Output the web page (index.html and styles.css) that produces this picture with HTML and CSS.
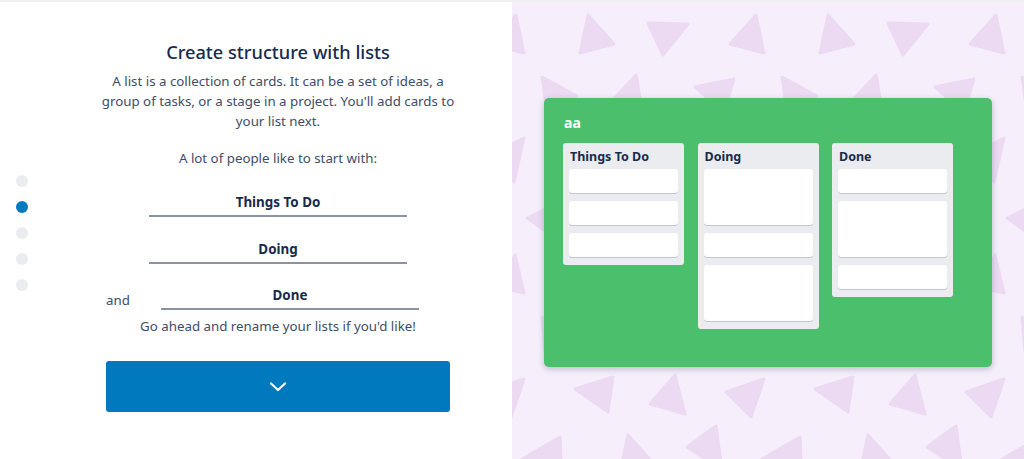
FILE: index.html
```html
<!DOCTYPE html>
<html lang="en">
<head>
<meta charset="utf-8">
<title>Create structure with lists</title>
<link rel="stylesheet" href="styles.css">
</head>
<body>
<div class="page">
  <section class="intro">
    <nav class="steps">
      <span class="dot"></span>
      <span class="dot active"></span>
      <span class="dot"></span>
      <span class="dot"></span>
      <span class="dot"></span>
    </nav>
    <div class="content">
      <h1 class="title">Create structure with lists</h1>
      <p class="lead">A list is a collection of cards. It can be a set of ideas, a group of tasks, or a stage in a project. You'll add cards to your list next.</p>
      <p class="prompt">A lot of people like to start with:</p>
      <div class="fields">
        <div class="field-row"><input class="list-input" type="text" value="Things To Do"></div>
        <div class="field-row"><input class="list-input" type="text" value="Doing"></div>
        <div class="field-row last"><span class="and">and</span><input class="list-input" type="text" value="Done"></div>
      </div>
      <p class="hint">Go ahead and rename your lists if you'd like!</p>
      <button class="next" type="button" aria-label="Next">
        <svg width="18" height="10" viewBox="0 0 18 10"><path d="M2 1.5 L9 8 L16 1.5" fill="none" stroke="#fff" stroke-width="2.2" stroke-linecap="round" stroke-linejoin="round"/></svg>
      </button>
    </div>
  </section>
  <section class="preview">
    <svg class="pattern" width="512" height="457" viewBox="0 2 512 457" aria-hidden="true">
      <defs>
        <g id="tile">
          <polygon points="76,15 102,44 68,53"/>
          <polygon points="136,23 176,24 151,55"/>
          <polygon points="4,15 12,53 -22,44"/>
          <polygon points="30,77 65,96 35,112"/>
          <polygon points="124,75 131,113 97,104"/>
          <polygon points="183,87 222,79 212,113"/>
          <polygon points="12,138 2,182 -12,150"/>
          <polygon points="15,218 52,200 46,240"/>
          <polygon points="3,255 12,293 -10,288"/>
          <polygon points="30,317 62,336 33,352"/>
          <polygon points="63,389 101,377 96,412"/>
          <polygon points="163,375 173,414 138,404"/>
          <polygon points="12,379 -1,417 -26,392"/>
          <polygon points="48,437 50,480 0,465"/>
          <polygon points="116,435 142,464 108,473"/>
          <polygon points="175,447 204,426 210,470"/>
        </g>
      </defs>
      <g class="tri">
        <use href="#tile" x="-240"/>
        <use href="#tile" x="0"/>
        <use href="#tile" x="240"/>
        <use href="#tile" x="480"/>
      </g>
    </svg>
    <div class="board">
      <div class="board-name">aa</div>
      <div class="lists">
        <div class="list">
          <div class="list-title">Things To Do</div>
          <div class="card"></div>
          <div class="card"></div>
          <div class="card"></div>
        </div>
        <div class="list">
          <div class="list-title">Doing</div>
          <div class="card tall"></div>
          <div class="card"></div>
          <div class="card tall"></div>
        </div>
        <div class="list">
          <div class="list-title">Done</div>
          <div class="card"></div>
          <div class="card tall"></div>
          <div class="card"></div>
        </div>
      </div>
    </div>
  </section>
</div>
</body>
</html>
```

FILE: styles.css
```css
* { box-sizing: border-box; }

html, body {
  margin: 0;
  padding: 0;
  height: 100%;
  overflow: hidden;
}

body {
  font-family: "Noto Sans", "Open Sans", "Liberation Sans", sans-serif;
  color: #172b4d;
  background: #fff;
}

.page {
  display: flex;
  height: 459px;
  border-top: 2px solid #f0f0f2;
}

/* ---------- left: intro ---------- */
.intro {
  width: 512px;
  flex: none;
  display: flex;
  background: #fff;
}

.steps {
  width: 106px;
  flex: none;
  display: flex;
  flex-direction: column;
  justify-content: center;
  gap: 14px;
  padding: 4px 0 0 16px;
}

.dot {
  width: 12px;
  height: 12px;
  border-radius: 50%;
  background: #ebecf0;
}

.dot.active { background: #0079bf; }

.content {
  width: 344px;
  flex: none;
  padding-top: 38px;
  display: flex;
  flex-direction: column;
  align-items: stretch;
  text-align: center;
}

.title {
  margin: 0;
  font-size: 18.2px;
  line-height: 24px;
  font-weight: 500;
  color: #172b4d;
}

.lead {
  margin: 7px -6px 0;
  font-size: 13.3px;
  line-height: 20px;
  color: #3e4d68;
}

.prompt {
  margin: 17px 0 0;
  font-size: 13.3px;
  line-height: 20px;
  color: #3e4d68;
}

.fields {
  margin-top: 19px;
  display: flex;
  flex-direction: column;
  gap: 16.5px;
}

.field-row {
  display: flex;
  align-items: flex-end;
  padding-left: 43px;
}

.field-row.last { padding-left: 0; }

.and {
  width: 55px;
  flex: none;
  text-align: left;
  font-size: 13.3px;
  line-height: 20px;
  color: #3e4d68;
}

.list-input {
  width: 258px;
  height: 30px;
  padding: 5px 0 3px;
  border: 0;
  border-bottom: 2px solid #8993a4;
  background: transparent;
  font-family: inherit;
  font-size: 13.4px;
  line-height: 20px;
  font-weight: 700;
  color: #172b4d;
  text-align: center;
  outline: none;
}

.hint {
  margin: 6px 0 0;
  font-size: 13.3px;
  line-height: 20px;
  color: #3e4d68;
}

.next {
  margin-top: 25px;
  height: 51px;
  width: 344px;
  border: 0;
  border-radius: 3px;
  background: #0079bf;
  display: flex;
  align-items: center;
  justify-content: center;
  padding: 0;
  cursor: pointer;
}

.next svg { display: block; margin-top: 1px; }

/* ---------- right: preview ---------- */
.preview {
  position: relative;
  flex: 1;
  background: #f6eefa;
  display: flex;
  justify-content: center;
  align-items: flex-start;
  padding-top: 96px;
  overflow: hidden;
}

.pattern {
  position: absolute;
  left: 0;
  top: 0;
}

.tri {
  fill: #ecdaf3;
  stroke: #ecdaf3;
  stroke-width: 3;
  stroke-linejoin: round;
}

.board {
  position: relative;
  width: 448px;
  height: 269px;
  background: #4bbf6b;
  border-radius: 5px;
  box-shadow: 0 2px 6px rgba(9, 30, 66, 0.25);
  padding: 15px 19px 0;
}

.board-name {
  font-size: 14px;
  line-height: 20px;
  font-weight: 700;
  color: #fff;
  padding-left: 1px;
}

.lists {
  margin-top: 10px;
  display: flex;
  align-items: flex-start;
  gap: 13.5px;
}

.list {
  width: 121px;
  background: #ebecf0;
  border-radius: 3px;
  padding: 4px 6px 8px 6px;
  display: flex;
  flex-direction: column;
  gap: 8px;
}

.list-title {
  font-size: 12.5px;
  line-height: 20px;
  font-weight: 700;
  color: #172b4d;
  padding-left: 1px;
  margin-bottom: -6px;
}

.card {
  height: 24px;
  background: #fff;
  border-radius: 3px;
  box-shadow: 0 1px 0 rgba(9, 30, 66, 0.18);
}

.card.tall { height: 56px; }
```
